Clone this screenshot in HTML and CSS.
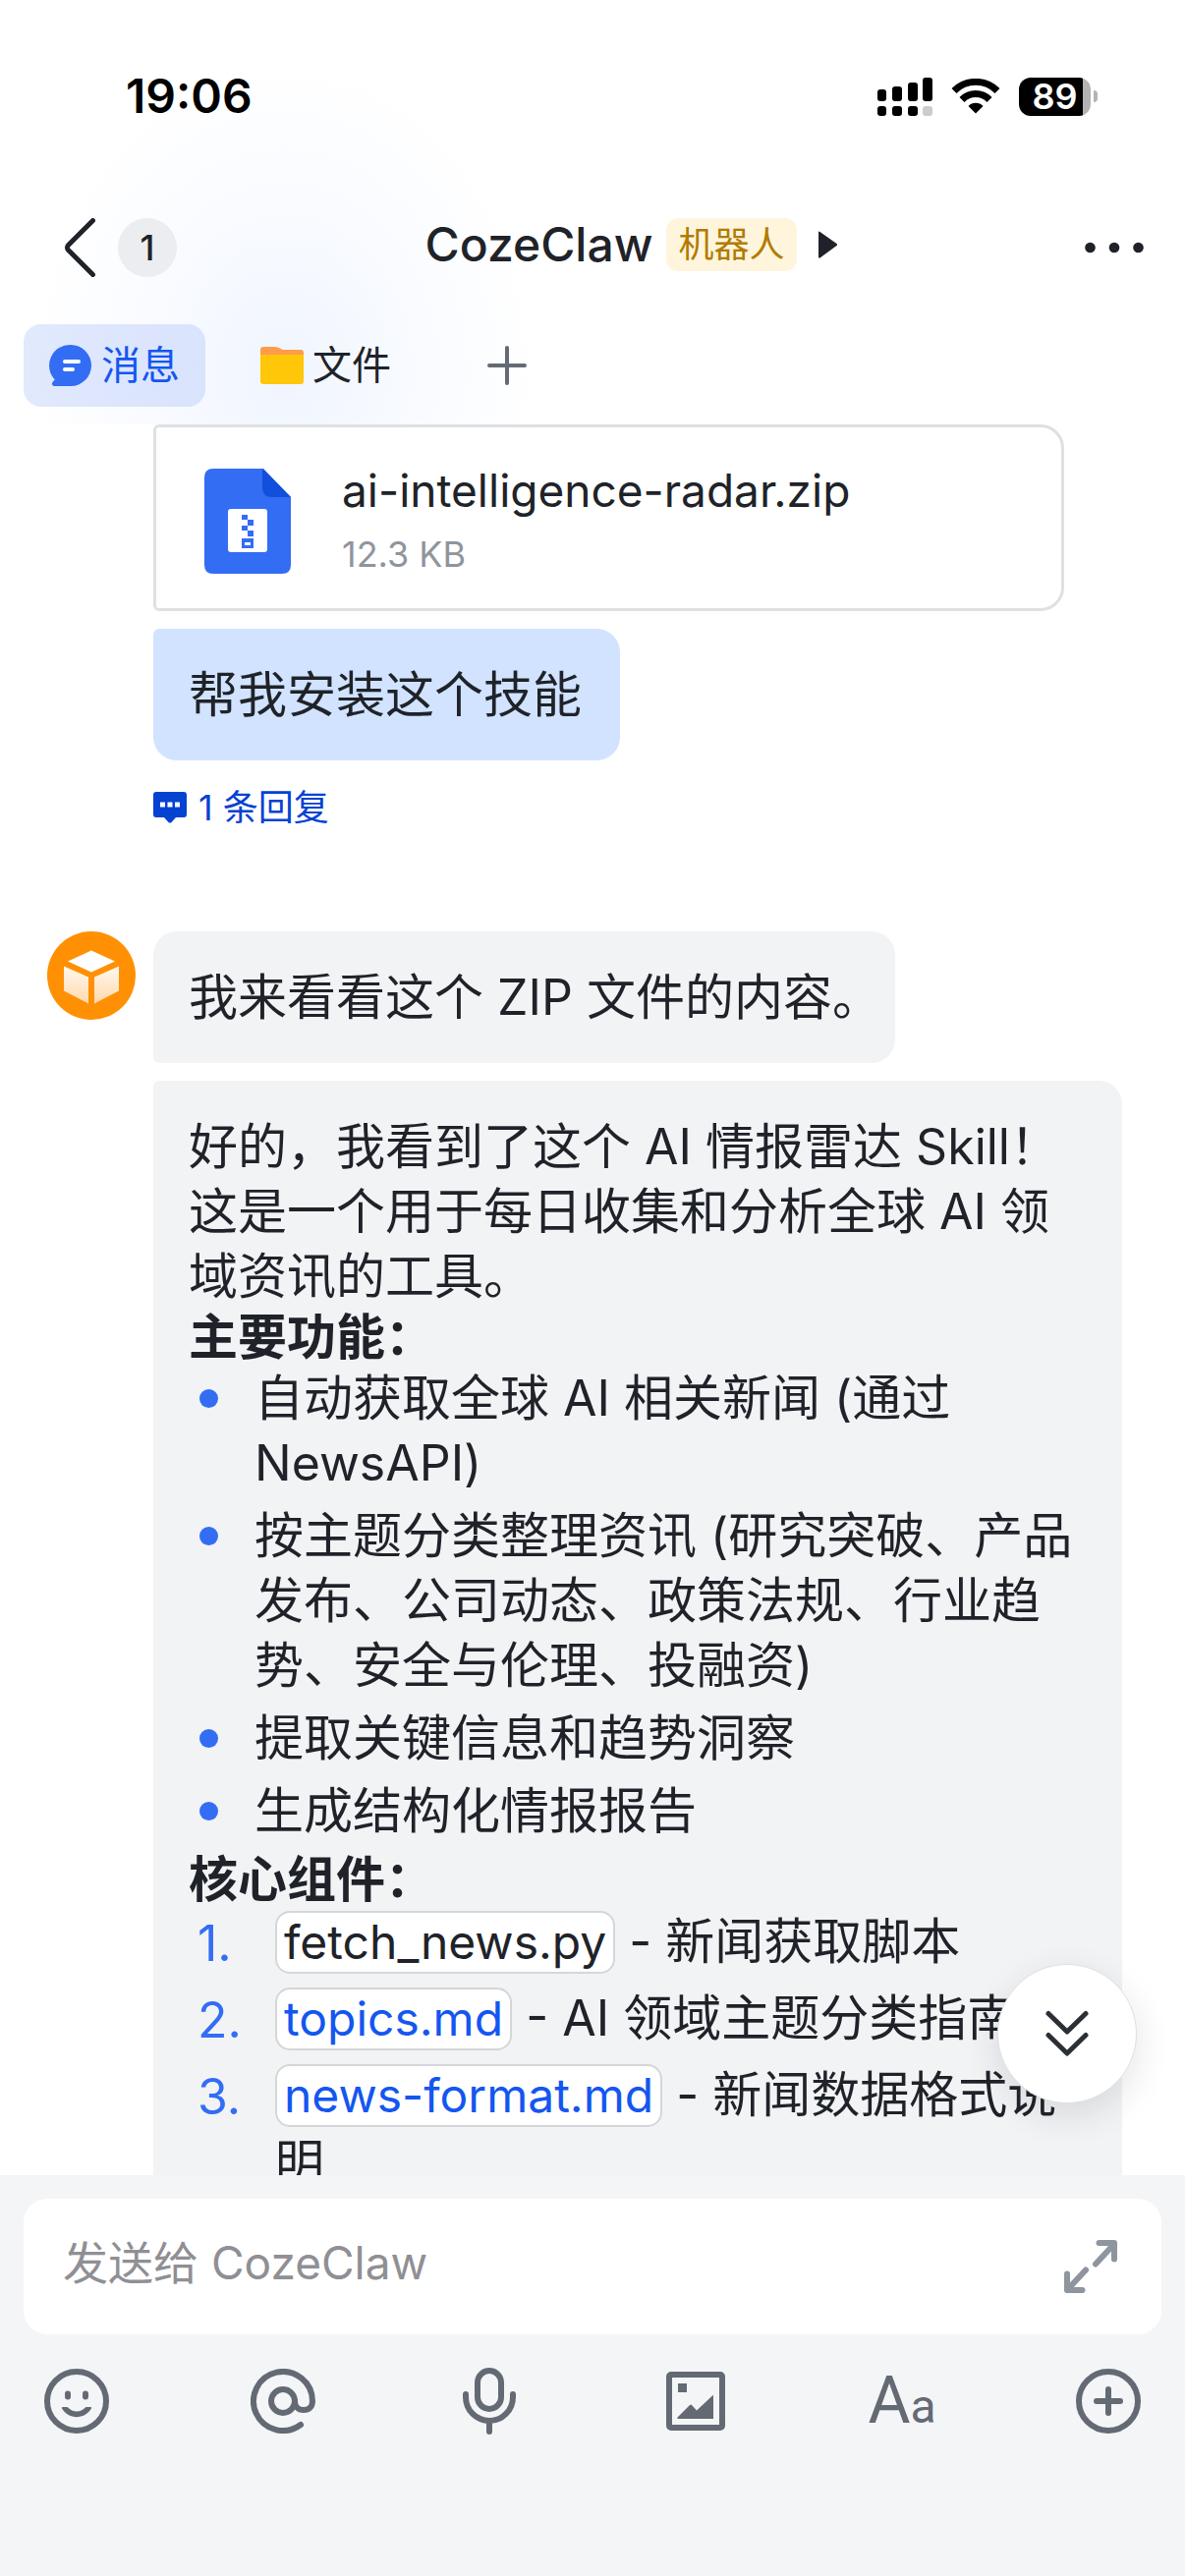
FILE: index.html
```html
<!DOCTYPE html>
<html lang="zh-CN">
<head>
  <meta charset="UTF-8" />
  <meta name="viewport" content="width=device-width, initial-scale=1" />
  <title>CozeClaw</title>
  <link rel="stylesheet" href="styles.css">
</head>
<body>
  <div class="app">
    <header class="header">
      <div class="status-bar">
        <span class="clock">19:06</span>
        <div class="status-icons">
          <!-- dual SIM signal -->
          <svg width="56" height="39" viewBox="0 0 56 39">
            <rect x="0" y="12" width="9" height="12" rx="3" />
            <rect x="15" y="9" width="10" height="15" rx="3" />
            <rect x="31" y="5" width="10" height="19" rx="3" />
            <rect x="46" y="0" width="10" height="24" rx="3" />
            <rect x="0" y="29" width="9" height="10" rx="3" />
            <rect x="15" y="29" width="10" height="10" rx="3" />
            <rect x="31" y="29" width="10" height="10" rx="3" />
            <rect x="46" y="29" width="10" height="10" rx="3" fill="#ccc" />
          </svg>
          <svg width="50" height="36" viewBox="0 0 50 36">
            <path d="M3 12.5a31 31 0 0 1 44 0M11 21.5a19.500 19.500 0 0 1 28 0" fill="none" stroke="#000" stroke-width="7" />
            <path d="M25 35.500 17.500 28a10.500 10.500 0 0 1 15 0z" />
          </svg>
          <div class="battery">
            <span class="battery-level">89</span>
          </div>
        </div>
      </div>

      <nav class="nav">
        <div class="nav-left">
          <button class="icon-button" aria-label="返回">
            <svg width="34" height="60" viewBox="0 0 34 60">
              <path d="M30.500 2.500 5.500 27.500a3.500 3.500 0 0 0 0 5l25 25" fill="none" stroke="#1f2329" stroke-width="5" stroke-linecap="round" />
            </svg>
          </button>
          <span class="unread">1</span>
        </div>
        <button class="nav-title">
          <span class="nav-name">CozeClaw</span>
          <span class="tag">机器人</span>
          <svg class="nav-arrow" width="19" height="28" viewBox="0 0 19 28">
            <path d="M0 1.500Q0 0 1.500 1L18.500 13a1.300 1.300 0 0 1 0 2L1.500 27.500Q0 28 0 26.500z" fill="#1f2329" />
          </svg>
        </button>
        <button class="icon-button" aria-label="更多">
          <svg width="60" height="12" viewBox="0 0 60 12">
            <circle cx="5.500" cy="6" r="5.300" fill="#1f2329" />
            <circle cx="30" cy="6" r="5.300" fill="#1f2329" />
            <circle cx="54.500" cy="6" r="5.300" fill="#1f2329" />
          </svg>
        </button>
      </nav>

      <div class="tabs">
        <button class="tab tab-active">
          <svg width="44" height="44" viewBox="0 0 44 44">
            <path d="M22 1a21 21 0 0 1 0 42H5.500c-2.500 0-3.300-2.800-1.700-4.400l2-2.200A21 21 0 0 1 22 1z" fill="#336df4" />
            <path d="M16 18h14M16 26h8" stroke="#fff" stroke-width="4" stroke-linecap="round" />
          </svg>
          消息
        </button>
        <button class="tab">
          <svg width="44" height="40" viewBox="0 0 44 40">
            <path d="M0 20V4q0-3 3-3h11q3 0 5 1l3 1.500q1 .5 3 .5h16q3 0 3 3v13z" fill="#ff9c4a" />
            <path d="M0 9h44v27q0 3-3 3H3q-3 0-3-3z" fill="#ffc60a" />
          </svg>
          文件
        </button>
        <button class="icon-button tab-add" aria-label="添加标签页">
          <svg width="40" height="40" viewBox="0 0 40 40">
            <path d="M20 2v36M2 20h36" stroke="#646a73" stroke-width="4" stroke-linecap="round" />
          </svg>
        </button>
      </div>
    </header>

    <main class="chat">
      <section class="message">
        <div class="message-body">
          <div class="file-card">
            <svg width="88" height="107" viewBox="0 0 88 107">
              <path d="M9 0h51l28 29v69q0 9-9 9H9q-9 0-9-9V9q0-9 9-9z" fill="#336df4" />
              <path d="M59 0q.5 0 1.500 1L87 28q1 1 1 1H69q-10 0-10-10z" fill="#124fdc" />
              <rect x="24" y="41" width="40" height="44" rx="3" fill="#fff" />
              <path d="M38 47h6v5h-6zM44 52h6v6h-6zM38 58h6v5h-6zM44 63h6v6h-6zM38 71h12v10H38z" fill="#336df4" />
              <path d="M41 75h6v3h-6z" fill="#fff" />
            </svg>
            <div class="file-info">
              <div class="file-name">ai-intelligence-radar.zip</div>
              <div class="file-size">12.3 KB</div>
            </div>
          </div>
          <div class="bubble bubble-own">帮我安装这个技能</div>
          <button class="reply-link">
            <svg width="34" height="36" viewBox="0 0 34 36">
              <path d="M3 2h28q3 0 3 3v20q0 3-3 3h-8l-4.500 5q-1.500 1.200-3 0L11 28H3q-3 0-3-3V5q0-3 3-3z" fill="#0442d2" />
              <path d="M7 12.500h5v5H7zM14.500 12.500h5v5h-5zM22 12.500h5v5h-5z" fill="#fff" />
            </svg>
            1 条回复
          </button>
        </div>
      </section>

      <section class="message">
        <svg class="avatar" width="90" height="90" viewBox="0 0 90 90">
          <defs>
            <linearGradient id="side" x1="0" y1="0" x2="0" y2="1">
              <stop offset="0" stop-color="#fff8f0" />
              <stop offset="1" stop-color="#ffd9ac" />
            </linearGradient>
          </defs>
          <circle cx="45" cy="45" r="45" fill="#ff9004" />
          <path d="M45 19.500 69 30.500 45 41.500 21 30.500z" fill="#fff" />
          <path d="M17 35.500 42 46.500V73.500L17 60.500z" fill="url(#side)" />
          <path d="M73 35.500 48 46.500V73.500L73 60.500z" fill="url(#side)" />
        </svg>
        <div class="message-body">
          <div class="bubble bubble-first">我来看看这个 ZIP 文件的内容。</div>
          <div class="bubble bubble-next">
            <p>好的，我看到了这个 AI 情报雷达 Skill！这是一个用于每日收集和分析全球 AI 领域资讯的工具。</p>
            <h2>主要功能：</h2>
            <ul>
              <li>自动获取全球 AI 相关新闻 (通过 NewsAPI)</li>
              <li>按主题分类整理资讯 (研究突破、产品发布、公司动态、政策法规、行业趋势、安全与伦理、投融资)</li>
              <li>提取关键信息和趋势洞察</li>
              <li>生成结构化情报报告</li>
            </ul>
            <h2>核心组件：</h2>
            <ol>
              <li><code class="chip">fetch_news.py</code> - 新闻获取脚本</li>
              <li><a class="chip" href="#">topics.md</a> - AI 领域主题分类指南</li>
              <li><a class="chip" href="#">news-format.md</a> - 新闻数据格式说明</li>
            </ol>
          </div>
        </div>
      </section>

      <button class="scroll-down" aria-label="回到底部">
        <svg width="44" height="48" viewBox="0 0 44 48">
          <path d="M3 3.500 22 22 41 3.500M3 25.500 22 44 41 25.500" fill="none" stroke="#2b2f36" stroke-width="5" stroke-linecap="round" stroke-linejoin="round" />
        </svg>
      </button>
    </main>

    <footer class="composer">
      <div class="input-box">
        <input type="text" placeholder="发送给 CozeClaw" aria-label="发送给 CozeClaw">
        <button class="icon-button" aria-label="展开">
          <svg width="56" height="56" viewBox="0 0 56 56">
            <path d="M33 25.500 52 5M36.500 4H52v16.500M23 31.500 4 52M4 35.500V52h15.500" fill="none" stroke="#8f959e" stroke-width="6" stroke-linecap="round" stroke-linejoin="round" />
          </svg>
        </button>
      </div>
      <div class="toolbar">
        <button class="tool" aria-label="表情">
          <svg width="66" height="66" viewBox="0 0 66 66">
            <circle cx="33" cy="33" r="30" />
            <path d="M24 25.500v3M42 25.500v3" stroke-linecap="round" />
            <path class="solid" d="M18.500 39h5q9.500 9 19 0h5q1 0 .5 1.500c-7 11.500-23 11.500-30 0q-.5-1.500.5-1.500z" />
          </svg>
        </button>
        <button class="tool" aria-label="提及">
          <svg width="66" height="66" viewBox="0 0 66 66">
            <circle cx="33" cy="33" r="12" />
            <path d="M45 33c0 5 3 9 9 9s9-4 9-9A30 30 0 1 0 51 57" stroke-linecap="round" />
          </svg>
        </button>
        <button class="tool" aria-label="语音">
          <svg width="66" height="68" viewBox="0 0 66 68">
            <rect x="21" y="3" width="24" height="39" rx="12" />
            <path d="M9 27v3a24 24 0 0 0 48 0v-3M33 54v11" stroke-linecap="round" />
          </svg>
        </button>
        <button class="tool" aria-label="图片">
          <svg width="66" height="66" viewBox="0 0 66 66">
            <rect x="6" y="6" width="54" height="54" rx="2" />
            <path class="solid" d="M15 15h9v9h-9zM14.500 49.500 27 37q1-1 2 0l5 5.500L50 27.500q1-1 1 0V51H15q-1.500-.5-.5-1.500z" />
          </svg>
        </button>
        <button class="tool tool-text" aria-label="文字格式"><span class="big">A</span><span class="small">a</span></button>
        <button class="tool" aria-label="更多功能">
          <svg width="66" height="66" viewBox="0 0 66 66">
            <circle cx="33" cy="33" r="30" />
            <path d="M33 21v24M21 33h24" stroke-linecap="round" />
          </svg>
        </button>
      </div>
    </footer>
  </div>
</body>
</html>
```

FILE: styles.css
```css
* {
  box-sizing: border-box;
}

body {
  margin: 0;
  background: #fff;
  color: #1f2329;
  font-family: Inter, "Noto Sans CJK SC", sans-serif;
  font-size: 50px;
  line-height: 66px;
}

button {
  padding: 0;
  border: 0;
  background: none;
  color: inherit;
  font: inherit;
}

svg {
  display: block;
  flex: none;
}

.app {
  display: flex;
  flex-direction: column;
  height: 100vh;
}

/* Header */
.header {
  padding-bottom: 18px;
  background: radial-gradient(ellipse 260px 320px at 24% 88%, #f0f5fe 0%, #f9fbff 55%, #fff 100%);
}

.status-bar {
  display: flex;
  justify-content: space-between;
  align-items: center;
  padding: 65px 89px 0 128px;
}

.clock {
  font-size: 48px;
  font-weight: 600;
  color: #000;
}

.status-icons {
  display: flex;
  align-items: center;
  gap: 19px;
}

.battery {
  display: flex;
  align-items: center;
  gap: 3px;
}

.battery::after {
  content: "";
  width: 4px;
  height: 12px;
  border-radius: 0 6px 6px 0;
  background: #b3b3b3;
}

.battery-level {
  width: 73px;
  height: 39px;
  border-radius: 12px;
  background: linear-gradient(to right, #000 89%, #b3b3b3 89%);
  color: #fff;
  font-size: 36px;
  font-weight: 600;
  line-height: 39px;
  text-align: center;
}

.nav {
  display: flex;
  justify-content: space-between;
  align-items: center;
  padding: 91px 42px 0 64px;
}

.nav-left {
  display: flex;
  align-items: center;
  gap: 22px;
}

.unread {
  width: 60px;
  height: 60px;
  border-radius: 50%;
  background: #ecedf1;
  font-size: 36px;
  font-weight: 500;
  line-height: 60px;
  text-align: center;
}

.nav-title {
  display: flex;
  align-items: center;
  line-height: 54px;
  margin-bottom: 6px;
}

.nav-name {
  font-size: 48px;
  font-weight: 500;
}

.tag {
  margin-left: 14px;
  padding: 0 12px;
  border-radius: 12px;
  background: #fef5dc;
  color: #b27b00;
  font-size: 36px;
  line-height: 54px;
}

.nav-arrow {
  margin-left: 22px;
}

.tabs {
  display: flex;
  align-items: center;
  gap: 30px;
  margin-top: 48px;
  padding: 0 24px;
}

.tab {
  display: flex;
  align-items: center;
  gap: 9px;
  padding: 0 26px;
  border-radius: 18px;
  font-size: 40px;
  line-height: 84px;
}

.tab-active {
  background: rgba(51, 109, 244, 0.15);
  color: #1456f0;
}

.tab-add {
  margin-left: 42px;
}

/* Messages */
.chat {
  position: relative;
  flex: 1;
  min-height: 0;
  overflow: hidden;
  padding: 0 64px 0 48px;
}

.message {
  display: grid;
  grid-template-columns: 90px 1fr;
  column-gap: 18px;
  margin-bottom: 102px;
}

.message-body {
  grid-column: 2;
  display: flex;
  flex-direction: column;
  align-items: flex-start;
  gap: 18px;
}

.file-card {
  display: flex;
  align-items: center;
  gap: 52px;
  width: 94%;
  padding: 31px 49px 25px;
  border: 3px solid #dee0e3;
  border-radius: 6px 24px 24px 6px;
}

.file-info {
  padding-bottom: 6px;
}

.file-name {
  font-size: 46px;
}

.file-size {
  margin-top: 8px;
  color: #8f959e;
  font-size: 36px;
  line-height: 48px;
}

.bubble {
  padding: 34px 39px 34px 36px;
  border-radius: 24px;
  background: #f2f3f5;
}

.bubble-own {
  border-top-left-radius: 6px;
  background: #d1e3ff;
}

.bubble-first {
  border-bottom-left-radius: 6px;
  font-feature-settings: "halt";
}

.bubble-next {
  border-top-left-radius: 6px;
}

.reply-link {
  display: flex;
  align-items: center;
  gap: 12px;
  margin-top: 6px;
  color: #0442d2;
  font-size: 36px;
  line-height: 48px;
}

.bubble p,
.bubble h2,
.bubble ul,
.bubble ol {
  margin: 0;
  padding: 0;
}

.bubble h2 {
  font-size: 50px;
  font-weight: 700;
  line-height: 58px;
}

.bubble li {
  position: relative;
  list-style: none;
  margin-bottom: 8px;
}

.bubble ul li {
  padding-left: 67px;
}

.bubble ul li::before {
  content: "";
  position: absolute;
  top: 24px;
  left: 11px;
  width: 19px;
  height: 19px;
  border-radius: 50%;
  background: #336df4;
}

.bubble ol {
  counter-reset: item;
}

.bubble ol li {
  counter-increment: item;
  padding-left: 88px;
}

.bubble ol li::before {
  content: counter(item) ".";
  position: absolute;
  top: 3px;
  left: 9px;
  color: #336df4;
}

.chip {
  display: inline-block;
  margin: 3px 0;
  padding: 0 7px;
  border: 2px solid #d5d6d8;
  border-radius: 15px;
  background: #fff;
  font-family: inherit;
  font-size: 48px;
  line-height: 60px;
}

a.chip {
  color: #1456f0;
  text-decoration: none;
}

.scroll-down {
  position: absolute;
  right: 49px;
  bottom: 73px;
  display: flex;
  align-items: center;
  justify-content: center;
  width: 142px;
  height: 142px;
  border: 1px solid #dee0e3;
  border-radius: 50%;
  background: #fff;
  box-shadow: 0 12px 36px rgba(31, 35, 41, 0.12);
}

/* Composer */
.composer {
  padding: 24px 24px 144px;
  background: #f4f5f7;
}

.input-box {
  display: flex;
  align-items: center;
  padding: 0 44px 0 40px;
  border-radius: 24px;
  background: #fff;
}

.input-box input {
  flex: 1;
  min-width: 0;
  height: 138px;
  padding: 0 0 8px;
  border: 0;
  outline: 0;
  background: none;
  color: inherit;
  font: inherit;
  font-size: 46px;
}

.input-box input::placeholder {
  color: #8f8f94;
}

.toolbar {
  display: flex;
  justify-content: space-between;
  align-items: center;
  margin-top: 34px;
  padding: 0 21px;
}

.tool {
  width: 66px;
  height: 68px;
  color: #646a73;
}

.tool svg {
  fill: none;
  stroke: currentColor;
  stroke-width: 6;
}

.tool .solid {
  fill: currentColor;
  stroke: none;
}

.tool-text {
  display: flex;
  align-items: baseline;
  justify-content: center;
  font-family: Roboto, sans-serif;
  font-weight: 400;
  line-height: 68px;
}

.tool-text .big {
  font-size: 66px;
}

.tool-text .small {
  font-size: 48px;
}
```
